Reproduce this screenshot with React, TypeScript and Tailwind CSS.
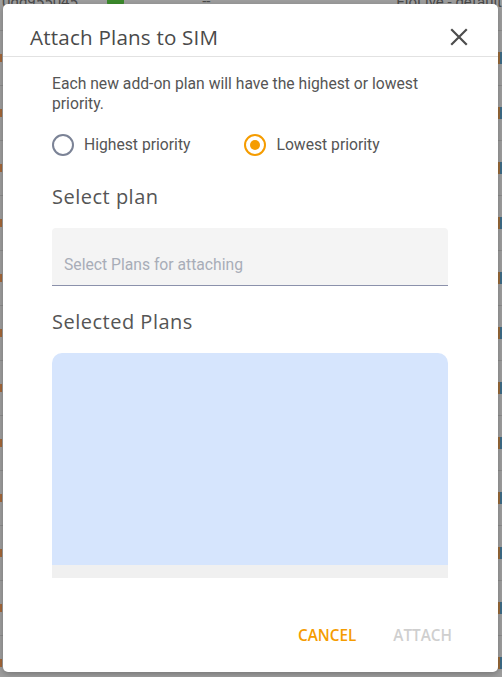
import React from "react"

const rows = Array.from({ length: 12 })

function Radio({ checked }: { checked?: boolean }) {
  return checked ? (
    <span className="flex h-[22px] w-[22px] items-center justify-center rounded-full border-2 border-[#f59c00]">
      <span className="h-[10px] w-[10px] rounded-full bg-[#f59c00]" />
    </span>
  ) : (
    <span className="h-[22px] w-[22px] rounded-full border-2 border-[#7b8396]" />
  )
}

export default function App() {
  return (
    <div className="relative h-[677px] w-[502px] overflow-hidden bg-[#9e9e9e] font-['Roboto',sans-serif]">
      {/* table behind the overlay */}
      <div className="flex h-[31px] items-start border-b border-[#8d8d8d] text-[15px] text-[#4a4a4a]">
        <span className="-mt-[9px] w-[110px] pl-[2px]">0dd955045</span>
        <span className="-mt-[2px] h-[7px] w-[18px] rounded-b-[2px] bg-[#3c8a2c]" />
        <span className="-mt-[10px] ml-[78px] w-[200px]">--</span>
        <span className="-mt-[9px] whitespace-nowrap">EloLive - default</span>
      </div>
      {rows.map((_, i) => (
        <div key={i} className="flex h-[55px] items-center justify-between border-b border-[#8d8d8d]">
          <span className="h-[8px] w-[2px] bg-[#a4683a]" />
          <span className="flex">
            <span className="h-[12px] w-[2px] bg-[#9a6b3a]" />
            <span className="h-[12px] w-[2px] bg-[#3e6b86]" />
          </span>
        </div>
      ))}

      {/* dialog */}
      <div className="absolute left-[3px] top-[4px] flex h-[668px] w-[495px] flex-col rounded-[5px] bg-white shadow-[0_2px_6px_rgba(0,0,0,0.25)]">
        <div className="flex h-[53px] items-center justify-between border-b border-[#e2e2e2] pl-[27px] pr-[30px] pt-[14px]">
          <h2 className="font-['Open_Sans',sans-serif] text-[20.6px] tracking-[0.2px] text-[#4a4a4a]">
            Attach Plans to SIM
          </h2>
          <svg width="18" height="18" viewBox="0 0 18 18" className="mt-[-1px]">
            <path d="M2 2 L16 16 M16 2 L2 16" stroke="#4d4d4d" strokeWidth="2.2" strokeLinecap="square" />
          </svg>
        </div>

        <div className="flex flex-1 flex-col pl-[49px] pr-[50px]">
          <p className="mt-[17px] text-[15.7px] leading-[20px] text-[#555]">
            Each new add-on plan will have the highest or lowest priority.
          </p>

          <div className="mt-[19px] flex h-[24px] items-center text-[15.7px] text-[#555]">
            <label className="flex items-center gap-[10px]">
              <Radio />
              <span>Highest priority</span>
            </label>
            <label className="ml-[54px] flex items-center gap-[10px]">
              <Radio checked />
              <span>Lowest priority</span>
            </label>
          </div>

          <h3 className="mt-[28px] font-['Open_Sans',sans-serif] text-[20px] leading-[24px] tracking-[0.5px] text-[#555]">
            Select plan
          </h3>

          <div className="mt-[19px] h-[58px] rounded-t-[4px] border-b border-[#8b91ab] bg-[#f4f4f4] px-[12px] pt-[27px] text-[15.7px] leading-[20px] text-[#a8adb8]">
            Select Plans for attaching
          </div>

          <h3 className="mt-[24px] font-['Open_Sans',sans-serif] text-[20px] leading-[24px] tracking-[0.5px] text-[#555]">
            Selected Plans
          </h3>

          <div className="mt-[19px] flex flex-col">
            <div className="h-[212px] rounded-t-[10px] bg-[#d6e5fd]" />
            <div className="h-[13px] bg-[#f0f0f0]" />
          </div>

          <div className="mt-[47px] flex justify-end gap-[37px] font-['Open_Sans',sans-serif] text-[15.3px] font-semibold leading-[20px]">
            <button className="text-[#f59c00]">CANCEL</button>
            <button className="mr-[-4px] text-[#cfcfcf]">ATTACH</button>
          </div>
        </div>
      </div>
    </div>
  )
}
